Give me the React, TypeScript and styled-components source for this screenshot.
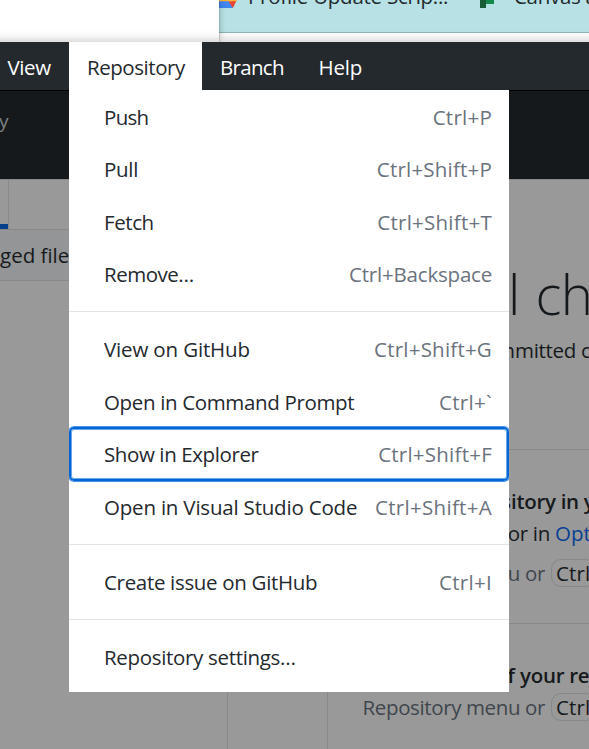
import React from 'react';
import styled, { createGlobalStyle } from 'styled-components';

const Global = createGlobalStyle`
  *, *::before, *::after { box-sizing: border-box; }
  body { margin: 0; overflow: hidden; }
`;

const Screen = styled.div`
  width: 589px;
  height: 749px;
  overflow: hidden;
  display: flex;
  flex-direction: column;
  background: #999;
  color: #16191c;
  font: 400 20.5px/28px 'Open Sans', 'Noto Sans', sans-serif;
  white-space: nowrap;
`;

const Label = styled.span<{ $track?: number }>`
  white-space: pre;
  letter-spacing: ${p => p.$track ?? 0}px;
`;

/* Windows behind the app */
const Backdrop = styled.div`
  position: relative;
  flex: 0 0 42px;
  display: flex;
  background: #fff;
  &::after {
    content: '';
    position: absolute;
    z-index: 2;
    inset: 30px 0 0;
    background: linear-gradient(rgba(0, 0, 0, 0), rgba(0, 0, 0, 0.035) 50%, rgba(0, 0, 0, 0.13));
  }
`;

const BlankWindow = styled.div`
  position: relative;
  z-index: 1;
  flex: 0 0 219px;
  background: #fff;
  box-shadow: 0 0 1px rgba(0, 0, 0, 0.5), 1px 0 6px rgba(0, 0, 0, 0.22);
`;

const Bookmarks = styled.div`
  flex: 1;
  height: 33px;
  display: flex;
  align-items: flex-start;
  background: #b7e1e4;
  border-bottom: 1px solid #8fb3b6;
  color: #22292c;
  overflow: hidden;
`;

const CloudIcon = styled.svg`
  flex: none;
  width: 19px;
  height: 9px;
`;

const SheetIcon = styled.svg`
  flex: none;
  width: 15px;
  height: 9px;
`;

const Bookmark = styled.div<{ $width: number; $gap: number }>`
  flex: 0 0 ${p => p.$width}px;
  padding-left: ${p => p.$gap}px;
  margin-top: -18px;
`;

/* Menu bar */
const MenuBar = styled.nav`
  position: relative;
  z-index: 2;
  flex: 0 0 48px;
  display: flex;
  background: #24292e;
  color: #fff;
`;

const MenuTitle = styled.div<{ $width: number; $pad: number; $open?: boolean }>`
  flex: 0 0 ${p => p.$width}px;
  padding: 11px 0 0 ${p => p.$pad}px;
  background: ${p => (p.$open ? '#fff' : 'transparent')};
  color: ${p => (p.$open ? '#24292e' : '#fff')};
`;

/* Dimmed application */
const Body = styled.div`
  position: relative;
  flex: 1;
  display: flex;
  flex-direction: column;
`;

const Toolbar = styled.div`
  flex: 0 0 89px;
  border-top: 1px solid #000;
  background: #15191c;
  color: #7e8183;
  padding-top: 16px;
  font-size: 19px;
`;

const ToolbarText = styled.div`
  margin-left: -1px;
`;

const Columns = styled.div`
  flex: 1;
  display: flex;
  border-top: 1px solid #87898b;
`;

const Sidebar = styled.div`
  flex: 0 0 228px;
  border-right: 1px solid #87898b;
`;

const TabStrip = styled.div`
  height: 50px;
  border-bottom: 1px solid #87898b;
  display: flex;
`;

const ActiveTab = styled.div`
  width: 9px;
  height: 49px;
  border-right: 1px solid #87898b;
  background: linear-gradient(#00408a, #00408a) 0 100% / 8px 5px no-repeat;
`;

const FileFilter = styled.div`
  height: 51px;
  padding-top: 11px;
  border-bottom: 1px solid #87898b;
  background: #949596;
`;

const FileColumn = styled.div`
  flex: 0 0 100px;
  border-right: 1px solid #87898b;
`;

const Detail = styled.div`
  flex: 1;
  min-width: 0;
  display: flex;
  flex-direction: column;
`;

const Intro = styled.section`
  height: 269px;
  padding-top: 76px;
`;

const Heading = styled.div`
  display: flex;
  height: 80px;
  font-size: 54.5px;
  line-height: 76px;
  font-weight: 300;
  word-spacing: 2.5px;
`;

const Action = styled.section`
  height: 174px;
  border-top: 1px solid #87898b;
  padding-top: 37px;
`;

const Line = styled.div<{ $tone?: 'bold' | 'muted'; $height?: number }>`
  display: flex;
  height: ${p => p.$height ?? 32}px;
  font-weight: ${p => (p.$tone === 'bold' ? 600 : 400)};
  color: ${p => (p.$tone === 'muted' ? '#3f464d' : '#16191c')};
`;

const Lead = styled.span<{ $width: number; $track?: number }>`
  flex: 0 0 ${p => p.$width}px;
  display: flex;
  justify-content: flex-end;
  white-space: pre;
  letter-spacing: ${p => p.$track ?? 0}px;
`;

const Link = styled.span`
  color: #063f93;
`;

const Key = styled.kbd`
  flex: none;
  height: 28px;
  margin-left: 6px;
  padding: 0 5px 0 4px;
  border: 1px solid #858789;
  border-radius: 10px;
  font: inherit;
  line-height: 26px;
  letter-spacing: 0.1px;
  color: #16191c;
`;

/* Open menu */
const Popup = styled.div`
  position: absolute;
  left: 69px;
  top: 0;
  width: 440px;
  height: 602px;
  background: #fff;
  color: #24292e;
`;

const Item = styled.div<{ $selected?: boolean }>`
  position: relative;
  height: 52.5px;
  padding: 12.6px 17px 0 35px;
  display: flex;
  justify-content: space-between;
  &::after {
    content: '';
    display: ${p => (p.$selected ? 'block' : 'none')};
    position: absolute;
    inset: -0.5px 0 -1px;
    border: 2px solid #0366d6;
    border-radius: 5px;
    box-shadow: 0 0 0 1px #4a92e2, inset 0 0 0 1px #6aa6e8;
    clip-path: inset(-1px 0);
  }
`;

const Shortcut = styled(Label)`
  color: #6a737d;
`;

const Separator = styled.div`
  height: 1px;
  margin: 11px 0 10.5px;
  background: #e1e4e8;
`;

type Entry = { label: string; track: number; keys?: string; keyTrack?: number; selected?: boolean };

const groups: Entry[][] = [
  [
    { label: 'Push', track: -0.7, keys: 'Ctrl+P', keyTrack: 0.25 },
    { label: 'Pull', track: -0.3, keys: 'Ctrl+Shift+P', keyTrack: 0.2 },
    { label: 'Fetch', track: -0.4, keys: 'Ctrl+Shift+T', keyTrack: 0.25 },
    { label: 'Remove…', track: -0.5, keys: 'Ctrl+Backspace', keyTrack: -0.2 },
  ],
  [
    { label: 'View on GitHub', track: -0.15, keys: 'Ctrl+Shift+G', keyTrack: 0.22 },
    { label: 'Open in Command Prompt', track: -0.35, keys: 'Ctrl+`', keyTrack: 0.3 },
    { label: 'Show in Explorer', track: -0.4, keys: 'Ctrl+Shift+F', keyTrack: 0.24 },
    { label: 'Open in Visual Studio Code', track: -0.2, keys: 'Ctrl+Shift+A', keyTrack: 0.3 },
  ],
  [{ label: 'Create issue on GitHub', track: -0.32, keys: 'Ctrl+I', keyTrack: 0.3 }],
  [{ label: 'Repository settings…', track: -0.32 }],
];

export default function App() {
  return (
    <Screen>
      <Global />
      <Backdrop>
        <BlankWindow />
        <Bookmarks>
          <CloudIcon viewBox="0 0 19 9">
            <path d="M0 1h10l4 7H0z" fill="#4285f4" />
            <path d="M9.500 1.500 17.500 0.500 14 8z" fill="#ea4335" />
            <path d="M0 0h18l-.5 1.200H0z" fill="#f9b233" />
          </CloudIcon>
          <Bookmark $width={242} $gap={10}>
            <Label $track={-0.25}>Profile Update Scrip...</Label>
          </Bookmark>
          <SheetIcon viewBox="0 0 15 9">
            <path d="M0 0h6v8H0z" fill="#185c37" />
            <path d="M6 0h8v4H6z" fill="#12874a" />
          </SheetIcon>
          <Bookmark $width={110} $gap={19}>
            <Label $track={-0.3}>Canvas a</Label>
          </Bookmark>
        </Bookmarks>
      </Backdrop>

      <MenuBar>
        <MenuTitle $width={69} $pad={7.5}><Label $track={-0.4}>View</Label></MenuTitle>
        <MenuTitle $width={133} $pad={18} $open><Label $track={-0.45}>Repository</Label></MenuTitle>
        <MenuTitle $width={98} $pad={18}><Label $track={-0.7}>Branch</Label></MenuTitle>
        <MenuTitle $width={98} $pad={18.6}><Label $track={-0.2}>Help</Label></MenuTitle>
      </MenuBar>

      <Body>
        <Toolbar><ToolbarText>y</ToolbarText></Toolbar>
        <Columns>
          <Sidebar>
            <TabStrip><ActiveTab /></TabStrip>
            <FileFilter><Label>ged file</Label></FileFilter>
          </Sidebar>
          <FileColumn />
          <Detail>
            <Intro>
              <Heading>
                <Lead $width={180} />
                <Label $track={-0.7}>l ch</Label>
              </Heading>
              <Line>
                <Lead $width={187}>m</Lead>
                <Label $track={-0.3}>mitted c</Label>
              </Line>
            </Intro>
            <Action>
              <Line $tone="bold">
                <Lead $width={183}>s</Lead>
                <Label $track={-0.3}>itory in y</Label>
              </Line>
              <Line $height={40}>
                <Lead $width={227} $track={-0.3}>or in </Lead>
                <Link>Opt</Link>
              </Line>
              <Line $tone="muted">
                <Lead $width={217} $track={-0.33}>u or</Lead>
                <Key>Ctrl</Key>
              </Line>
            </Action>
            <Action>
              <Line $tone="bold">
                <Lead $width={187}>f</Lead>
                <Label $track={-0.3}> your re</Label>
              </Line>
              <Line $tone="muted">
                <Lead $width={217} $track={-0.38}>Repository menu or</Lead>
                <Key>Ctrl</Key>
              </Line>
            </Action>
          </Detail>
        </Columns>

        <Popup>
          {groups.map((group, g) => (
            <React.Fragment key={g}>
              {g > 0 && <Separator />}
              {group.map(item => (
                <Item key={item.label} $selected={item.selected ?? item.label === 'Show in Explorer'}>
                  <Label $track={item.track}>{item.label}</Label>
                  {item.keys && <Shortcut $track={item.keyTrack}>{item.keys}</Shortcut>}
                </Item>
              ))}
            </React.Fragment>
          ))}
        </Popup>
      </Body>
    </Screen>
  );
}
